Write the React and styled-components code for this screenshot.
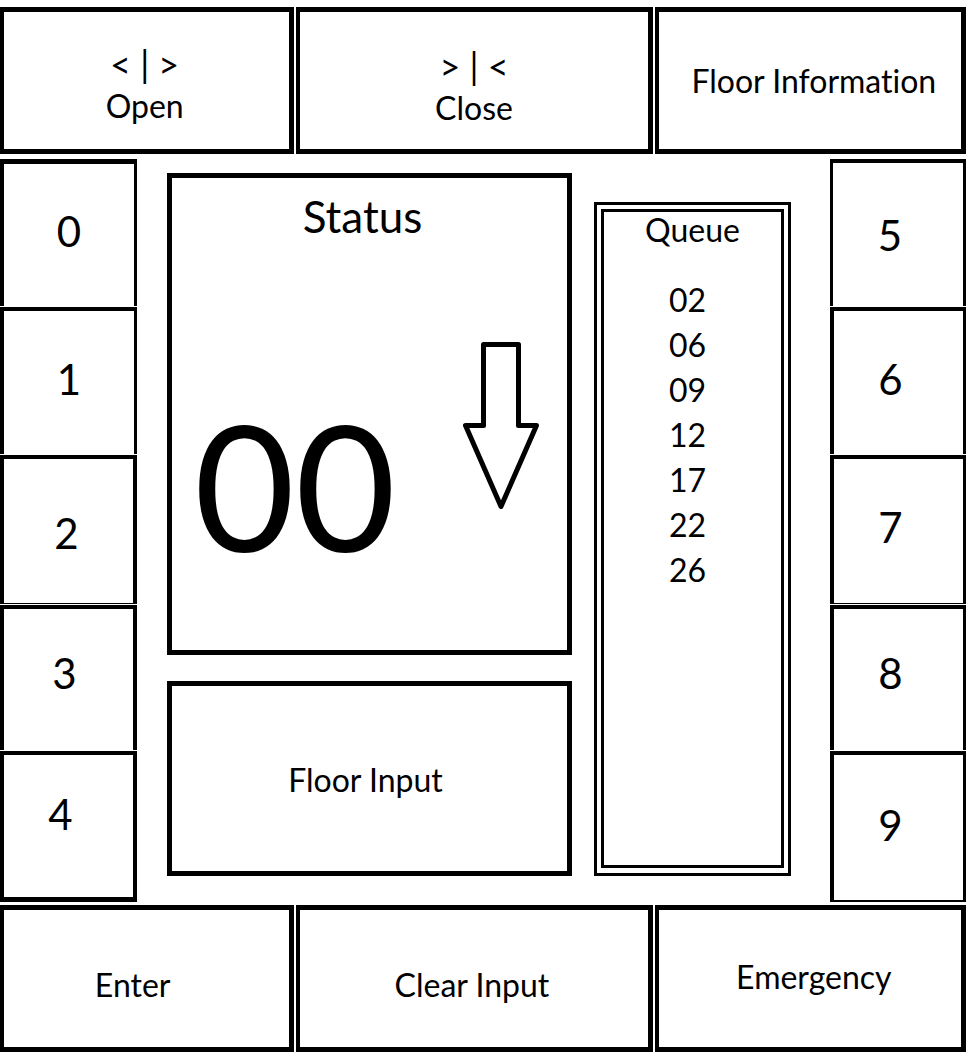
import React, { useState } from "react";
import styled, { createGlobalStyle } from "styled-components";

const GlobalStyle = createGlobalStyle`
  *, *::before, *::after { box-sizing: border-box; }
  body {
    margin: 0;
    background: #fff;
    color: #000;
    font-family: Lato, "Liberation Sans", sans-serif;
    font-size: 32px;
    font-variant-ligatures: none;
  }
`;

const Panel = styled.main`
  display: grid;
  grid-template-rows: minmax(147px, auto) 1fr minmax(147px, auto);
  row-gap: 3px;
  min-height: 100vh;
  padding: 7px 8px 12px 0;
`;

const ActionRow = styled.div`
  display: grid;
  grid-template-columns: 294fr 356fr 311fr;
  column-gap: 2px;
`;

const ActionButton = styled.button`
  display: flex;
  flex-direction: column;
  align-items: center;
  justify-content: center;
  padding: ${(p) => p.$pad || "0"};
  border: solid #000;
  border-width: 5px 5px 5px 4px;
  background: #fff;
  color: inherit;
  font: inherit;
  font-variant-ligatures: none;
  line-height: 42px;
  white-space: pre;
  cursor: pointer;
`;

const DoorSymbol = styled.span`
  font-size: 36px;
`;

const Middle = styled.div`
  display: grid;
  grid-template-columns: 137px 1fr 136px;
  padding-top: 2px;
`;

const Keypad = styled.div`
  display: grid;
  grid-template-rows: 147fr 147fr 148fr 145fr 151fr;
  row-gap: 1px;
`;

const Key = styled.button`
  display: flex;
  align-items: center;
  justify-content: center;
  padding: ${(p) => p.$pad};
  border: solid #000;
  border-width: ${(p) => p.$edges};
  background: #fff;
  color: inherit;
  font: inherit;
  font-size: 42px;
  line-height: 48px;
  cursor: pointer;
`;

const Center = styled.div`
  display: grid;
  grid-template-columns: 405fr 197fr;
  column-gap: 22px;
  padding: 14px 39px 26px 30px;
`;

const Displays = styled.div`
  display: grid;
  grid-template-rows: 482fr 195fr;
  row-gap: 26px;
`;

const StatusBox = styled.section`
  display: flex;
  flex-direction: column;
  border: 5px solid #000;
  padding-top: 14px;
`;

const StatusTitle = styled.h1`
  margin: 0;
  padding-right: 14px;
  font-size: 44px;
  font-weight: 400;
  line-height: 48px;
  text-align: center;
`;

const Readout = styled.div`
  display: flex;
  flex: 1;
  align-items: flex-start;
  justify-content: space-between;
  padding: 102px 28px 0 22px;
`;

const FloorNumber = styled.output`
  padding-top: 55px;
  font-size: 174px;
  line-height: 176px;
`;

const FloorField = styled.input`
  width: 100%;
  min-width: 0;
  padding: 2px 8px 0 0;
  border: 5px solid #000;
  border-radius: 0;
  background: #fff;
  color: #000;
  font: inherit;
  text-align: center;

  &::placeholder {
    color: #000;
    opacity: 1;
  }
`;

const QueueFrame = styled.section`
  display: grid;
  margin-top: 29px;
  border: 3px solid #000;
  padding: 4px 4px 5px;
`;

const QueueInner = styled.div`
  border: 3px solid #000;
`;

const QueueTitle = styled.h2`
  margin: 0;
  font-size: 32px;
  font-weight: 400;
  line-height: 36px;
  text-align: center;
`;

const QueueList = styled.ol`
  margin: 29px 0 0;
  padding: 0 10px 0 0;
  list-style: none;
  font-size: 32px;
  line-height: 45px;
  text-align: center;
`;

const leftKeys = [
  { digit: "0", edges: "5px 3px 0 4px", pad: "0 0 8px" },
  { digit: "1", edges: "4px 3px 0 4px", pad: "0 0 8px" },
  { digit: "2", edges: "4px 4px 1px 4px", pad: "4px 4px 0 0" },
  { digit: "3", edges: "4px 4px 0 4px", pad: "0 8px 12px 0" },
  { digit: "4", edges: "4px 4px 5px 4px", pad: "0 16px 24px 0" },
];

const rightKeys = [
  { digit: "5", edges: "4px 3px 0 3px", pad: "0 16px 0 0" },
  { digit: "6", edges: "4px 3px 0 4px", pad: "0 16px 8px 0" },
  { digit: "7", edges: "4px 3px 1px 4px", pad: "0 16px 8px 0" },
  { digit: "8", edges: "4px 3px 0 4px", pad: "0 16px 12px 0" },
  { digit: "9", edges: "4px 3px 2px 4px", pad: "0 16px 4px 0" },
];

const queue = ["02", "06", "09", "12", "17", "22", "26"];

function DownArrow() {
  return (
    <svg width="76" height="168" viewBox="0 0 76 168" role="img" aria-label="Going down">
      <path
        d="M20.5 2.5H55.5V83.5H73.5L38 164.5L2.5 83.5H20.5Z"
        fill="none"
        stroke="#000"
        strokeWidth="5"
        strokeLinejoin="round"
      />
    </svg>
  );
}

function KeyColumn({ keys, onPress }) {
  return (
    <Keypad>
      {keys.map((k) => (
        <Key key={k.digit} type="button" $edges={k.edges} $pad={k.pad} onClick={() => onPress(k.digit)}>
          {k.digit}
        </Key>
      ))}
    </Keypad>
  );
}

export default function App() {
  const [entry, setEntry] = useState("");
  const press = (digit) => setEntry((value) => value + digit);

  return (
    <>
      <GlobalStyle />
      <Panel>
        <ActionRow>
          <ActionButton type="button" $pad="8px 4px 0 0">
            <DoorSymbol>{"< | >"}</DoorSymbol>
            <span>Open</span>
          </ActionButton>
          <ActionButton type="button" $pad="12px 0 0">
            <DoorSymbol>{"> | <"}</DoorSymbol>
            <span>Close</span>
          </ActionButton>
          <ActionButton type="button" $pad="0 0 0 8px">Floor Information</ActionButton>
        </ActionRow>

        <Middle>
          <KeyColumn keys={leftKeys} onPress={press} />
          <Center>
            <Displays>
              <StatusBox>
                <StatusTitle>Status</StatusTitle>
                <Readout>
                  <FloorNumber>00</FloorNumber>
                  <DownArrow />
                </Readout>
              </StatusBox>
              <FloorField
                aria-label="Floor Input"
                placeholder="Floor Input"
                value={entry}
                onChange={(e) => setEntry(e.target.value)}
              />
            </Displays>
            <QueueFrame>
              <QueueInner>
                <QueueTitle>Queue</QueueTitle>
                <QueueList>
                  {queue.map((floor) => (
                    <li key={floor}>{floor}</li>
                  ))}
                </QueueList>
              </QueueInner>
            </QueueFrame>
          </Center>
          <KeyColumn keys={rightKeys} onPress={press} />
        </Middle>

        <ActionRow>
          <ActionButton type="button" $pad="12px 28px 0 0">Enter</ActionButton>
          <ActionButton type="button" $pad="12px 4px 0 0" onClick={() => setEntry("")}>Clear Input</ActionButton>
          <ActionButton type="button" $pad="0 0 4px 8px">Emergency</ActionButton>
        </ActionRow>
      </Panel>
    </>
  );
}
